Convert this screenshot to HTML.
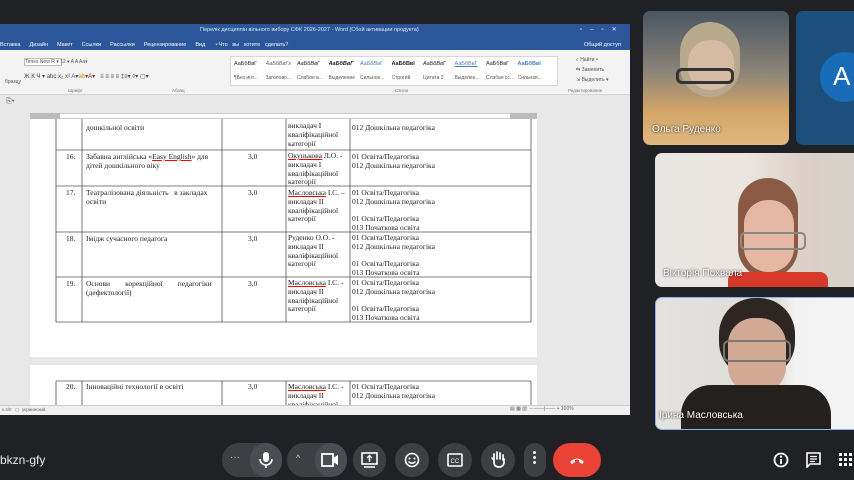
<!DOCTYPE html><html><head><meta charset="utf-8"><style>
*{margin:0;padding:0;box-sizing:border-box}
html,body{width:854px;height:480px;overflow:hidden}
body{background:#202124;position:relative;font-family:"Liberation Sans",sans-serif}
.a{position:absolute}
.doc{font-family:"Liberation Serif",serif;font-size:7.5px;color:#222;line-height:8.8px}
.t{position:absolute;font-size:6px;color:#555;white-space:nowrap}
.btn{position:absolute;top:443px;height:34px;border-radius:17px;background:#3c4043}
.nm{position:absolute;color:#fff;font-size:10px;text-shadow:0 0 2px #000;white-space:nowrap}
.st{display:inline-block;width:31.5px;overflow:hidden;white-space:nowrap}
</style></head><body>
<div class="a" style="left:0;top:24px;width:630px;height:391px;background:#e8e8e8"></div>
<div class="a" style="left:0;top:24px;width:630px;height:26px;background:#2b579a"></div>
<div class="t" style="left:200px;top:27px;color:#dfe6f3;font-size:5.5px">Перелік дисциплін вільного вибору СФК 2026-2027 - Word (Сбой активации продукта)</div>
<div class="t" style="left:0;top:42px;color:#fff;font-size:5.5px;word-spacing:3px">Вставка&nbsp; Дизайн&nbsp; Макет&nbsp; Ссылки&nbsp; Рассылки&nbsp; Рецензирование&nbsp; Вид&nbsp; ♀Что&nbsp;вы&nbsp;хотите&nbsp;сделать?</div>
<div class="t" style="left:584px;top:42px;color:#fff;font-size:5.5px">Общий доступ</div>
<div class="t" style="left:580px;top:26px;color:#fff;font-size:6px;letter-spacing:8px">▫–▫✕</div>
<div class="a" style="left:0;top:50px;width:630px;height:45px;background:#f3f3f3;border-bottom:1px solid #d4d4d4"></div>
<div class="a" style="left:24px;top:58px;width:38px;height:8px;background:#fff;border:1px solid #bbb"></div>
<div class="t" style="left:25px;top:59px;font-size:5px">Times New R ▾ 12 ▾ A A Aa▾</div>
<div class="t" style="left:24px;top:73px;font-size:6px;color:#444">Ж К Ч ▾ abc x₂ x² <span style="color:#36c">A</span>▾<span style="color:#c90">ab</span>▾<span style="color:#c00">A</span>▾ &nbsp; ≡ ≡ ≡ ≡ ‡≡▾ ◊▾ ▢▾</div>
<div class="a" style="left:230px;top:56px;width:328px;height:30px;background:#fff;border:1px solid #d8d8d8"></div>
<div class="t" style="left:234px;top:61px;font-size:5.5px;color:#222"><span class="st">АаБбВвГ</span><span class="st"><i style="color:#666">АаБбВвГг</i></span><span class="st"><i>АаБбВвГ</i></span><span class="st"><b><i>АаБбВвГ</i></b></span><span class="st"><i style="color:#4a7ebb">АаБбВвГ</i></span><span class="st"><b>АаБбВвІ</b></span><span class="st"><i>АаБбВвГ</i></span><span class="st"><u style="color:#4a7ebb">АаБбВвГ</u></span><span class="st">АаБбВвГ</span><span class="st"><b style="color:#4a7ebb">АаБбВвІ</b></span></div>
<div class="t" style="left:234px;top:75px;font-size:5px"><span class="st">¶Без инт...</span><span class="st">Заголово...</span><span class="st">Слабое в...</span><span class="st">Выделение</span><span class="st">Сильное...</span><span class="st">Строгий</span><span class="st">Цитата 2</span><span class="st">Выделен...</span><span class="st">Слабая сс...</span><span class="st">Сильная...</span></div>
<div class="t" style="left:576px;top:55px;font-size:5px;line-height:10px">⌕ Найти ▾<br>⇆ Заменить<br>⇲ Выделить ▾</div>
<div class="t" style="left:68px;top:88px;font-size:4.5px;color:#777">Шрифт</div>
<div class="t" style="left:172px;top:88px;font-size:4.5px;color:#777">Абзац</div>
<div class="t" style="left:395px;top:88px;font-size:4.5px;color:#777">Стили</div>
<div class="t" style="left:568px;top:88px;font-size:4.5px;color:#777">Редактирование</div>
<div class="t" style="left:5px;top:79px;font-size:5px">бразцу</div>
<div class="t" style="left:6px;top:98px;font-size:7px;color:#666">⎘▾</div>
<div class="a" style="left:30px;top:113px;width:507px;height:6px;background:#fff;border:1px solid #ccc"></div>
<div class="a" style="left:30px;top:113px;width:30px;height:6px;background:#bbb"></div>
<div class="a" style="left:510px;top:113px;width:27px;height:6px;background:#bbb"></div>
<div class="a" style="left:30px;top:119px;width:507px;height:238px;background:#fff"></div>
<div class="a" style="left:30px;top:365px;width:507px;height:40px;background:#fff"></div>
<div class="a doc" style="left:0;top:0;width:630px;height:405px;overflow:hidden">
<svg class="a" style="left:0;top:0" width="630" height="405">
<g stroke="#555" stroke-width="0.8" fill="none">
<line x1="56" y1="119" x2="56" y2="322"/><line x1="82" y1="119" x2="82" y2="322"/><line x1="222" y1="119" x2="222" y2="322"/><line x1="286" y1="119" x2="286" y2="322"/><line x1="350" y1="119" x2="350" y2="322"/><line x1="531" y1="119" x2="531" y2="322"/>
<line x1="56" y1="150" x2="531" y2="150"/><line x1="56" y1="186" x2="531" y2="186"/><line x1="56" y1="232" x2="531" y2="232"/><line x1="56" y1="277" x2="531" y2="277"/><line x1="56" y1="322" x2="531" y2="322"/>
<line x1="56" y1="381" x2="531" y2="381"/><line x1="56" y1="381" x2="56" y2="405"/><line x1="82" y1="381" x2="82" y2="405"/><line x1="222" y1="381" x2="222" y2="405"/><line x1="286" y1="381" x2="286" y2="405"/><line x1="350" y1="381" x2="350" y2="405"/><line x1="531" y1="381" x2="531" y2="405"/>
</g></svg>
<div class="a" style="left:86px;top:124px">дошкільної освіти</div>
<div class="a" style="left:288px;top:122px">викладач I<br>кваліфікаційної<br>категорії</div>
<div class="a" style="left:352px;top:124px">012 Дошкільна педагогіка</div>
<div class="a" style="left:66px;top:153px">16.</div><div class="a" style="left:86px;top:153px;width:134px">Забавна англійська «<u style="text-decoration-color:red">Easy English</u>» для дітей дошкільного віку</div><div class="a" style="left:248px;top:153px">3,0</div><div class="a" style="left:288px;top:152px"><u style="text-decoration-color:red">Окунькова</u> Л.О. -<br>викладач I<br>кваліфікаційної<br>категорії</div><div class="a" style="left:352px;top:153px">01 Освіта/Педагогіка<br>012 Дошкільна педагогіка</div>
<div class="a" style="left:66px;top:189px">17.</div><div class="a" style="left:86px;top:189px;width:134px">Театралізована діяльність &nbsp; в закладах освіти</div><div class="a" style="left:248px;top:189px">3,0</div><div class="a" style="left:288px;top:189px"><u style="text-decoration-color:red">Масловська</u> І.С. –<br>викладач II<br>кваліфікаційної<br>категорії</div><div class="a" style="left:352px;top:189px">01 Освіта/Педагогіка<br>012 Дошкільна педагогіка<br><br>01 Освіта/Педагогіка<br>013 Початкова освіта</div>
<div class="a" style="left:66px;top:235px">18.</div><div class="a" style="left:86px;top:235px">Імідж сучасного педагога</div><div class="a" style="left:248px;top:235px">3,0</div><div class="a" style="left:288px;top:234px">Руденко О.О. -<br>викладач II<br>кваліфікаційної<br>категорії</div><div class="a" style="left:352px;top:234px">01 Освіта/Педагогіка<br>012 Дошкільна педагогіка<br><br>01 Освіта/Педагогіка<br>013 Початкова освіта</div>
<div class="a" style="left:66px;top:280px">19.</div><div class="a" style="left:86px;top:280px;width:134px">Основи &nbsp;&nbsp;&nbsp;&nbsp;&nbsp;&nbsp; корекційної &nbsp;&nbsp;&nbsp;&nbsp;&nbsp;&nbsp; педагогіки (дефектології)</div><div class="a" style="left:248px;top:280px">3,0</div><div class="a" style="left:288px;top:279px"><u style="text-decoration-color:red">Масловська</u> І.С. -<br>викладач II<br>кваліфікаційної<br>категорії</div><div class="a" style="left:352px;top:279px">01 Освіта/Педагогіка<br>012 Дошкільна педагогіка<br><br>01 Освіта/Педагогіка<br>013 Початкова освіта</div>
<div class="a" style="left:66px;top:383px">20.</div><div class="a" style="left:86px;top:383px">Інноваційні технології в освіті</div><div class="a" style="left:248px;top:383px">3,0</div><div class="a" style="left:288px;top:383px"><u style="text-decoration-color:red">Масловська</u> І.С. -<br>викладач II<br>кваліфікаційної</div><div class="a" style="left:352px;top:383px">01 Освіта/Педагогіка<br>012 Дошкільна педагогіка</div>
</div>
<div class="a" style="left:0;top:405px;width:630px;height:10px;background:#f0f0f0;border-top:1px solid #ccc"></div>
<div class="t" style="left:2px;top:407px;font-size:4.5px;color:#666">к 4/0 &nbsp; ▢ &nbsp;украинский</div>
<div class="t" style="left:510px;top:406px;font-size:5px;color:#666">▤ ▦ ▥ &nbsp;– ——|—— + 100%</div>
<!-- tiles -->
<div class="a" style="left:643px;top:11px;width:146px;height:134px;border-radius:7px;overflow:hidden;background:linear-gradient(180deg,#4a5562 0%,#8a8478 45%,#d3a568 75%,#e0b880 100%)">
<div class="a" style="left:37px;top:11px;width:60px;height:75px;border-radius:30px;background:#b9a98c"></div>
<div class="a" style="left:45px;top:29px;width:46px;height:50px;border-radius:22px;background:#d6bba3"></div>
<div class="a" style="left:33px;top:57px;width:58px;height:16px;border:3px solid #333;border-radius:6px"></div>
</div>
<div class="nm" style="left:652px;top:124px">Ольга Руденко</div>
<div class="a" style="left:796px;top:11px;width:58px;height:134px;border-radius:7px 0 0 7px;overflow:hidden;background:#1d4f7d">
<div class="a" style="left:24px;top:41px;width:50px;height:50px;border-radius:25px;background:#1a6bb8"></div>
<div class="a" style="left:37px;top:50px;color:#fff;font-size:26px">A</div>
</div>
<div class="a" style="left:655px;top:153px;width:199px;height:134px;border-radius:7px 0 0 7px;overflow:hidden;background:linear-gradient(90deg,#e8e6e4 0%,#ebe5e0 45%,#dcd0c8 75%,#d8d2cc 100%)">
<div class="a" style="left:83px;top:25px;width:60px;height:100px;border-radius:30px;background:#8a5a45"></div>
<div class="a" style="left:89px;top:47px;width:50px;height:72px;border-radius:24px;background:#e4b8a4"></div>
<div class="a" style="left:73px;top:119px;width:100px;height:15px;border-radius:8px 8px 0 0;background:#d63a2a"></div>
<div class="a" style="left:85px;top:79px;width:66px;height:18px;border:2px solid #888;border-radius:5px"></div>
</div>
<div class="nm" style="left:663px;top:268px">Вікторія Похвала</div>
<div class="a" style="left:655px;top:297px;width:199px;height:133px;border-radius:7px 0 0 7px;overflow:hidden;background:linear-gradient(90deg,#e4e2e0 0%,#dddbd8 60%,#f2f2f2 70%,#f4f4f4 100%);border:1px solid #8ab4f8;border-right:none">
<div class="a" style="left:63px;top:0;width:76px;height:80px;border-radius:36px;background:#2d2622"></div>
<div class="a" style="left:72px;top:20px;width:58px;height:75px;border-radius:26px;background:#d2aa94"></div>
<div class="a" style="left:67px;top:42px;width:68px;height:22px;border:2px solid #777;border-radius:6px"></div>
<div class="a" style="left:25px;top:87px;width:150px;height:46px;border-radius:30px 30px 0 0;background:#24201e"></div>
</div>
<div class="nm" style="left:659px;top:410px">Ірина Масловська</div>
<!-- bottom bar -->
<div class="a" style="left:0;top:453px;color:#e8eaed;font-size:12px">bkzn-gfy</div>
<div class="btn" style="left:222px;width:60px"></div><div class="btn" style="left:250px;width:32px;background:#4a4d51"></div>
<div class="a" style="left:230px;top:452px;color:#ccc;font-size:10px">···</div>
<svg class="a" style="left:258px;top:451px" width="16" height="18"><rect x="5" y="1" width="6" height="10" rx="3" fill="#fff"/><path d="M2 8a6 6 0 0 0 12 0M8 14v3" stroke="#fff" stroke-width="1.6" fill="none"/></svg>
<div class="btn" style="left:287px;width:60px"></div><div class="btn" style="left:315px;width:32px;background:#4a4d51"></div>
<div class="a" style="left:296px;top:453px;color:#ccc;font-size:9px">^</div>
<svg class="a" style="left:321px;top:453px" width="18" height="14"><rect x="1" y="1" width="11" height="12" fill="none" stroke="#fff" stroke-width="1.8"/><path d="M12 5l5-3v10l-5-3z" fill="#fff"/></svg>
<div class="btn" style="left:353px;width:33px"></div>
<svg class="a" style="left:361px;top:452px" width="17" height="16"><rect x="1" y="1" width="15" height="11" fill="none" stroke="#fff" stroke-width="1.6"/><path d="M8.5 10V4M6 6l2.5-2.5L11 6M3 15h11" stroke="#fff" stroke-width="1.5" fill="none"/></svg>
<div class="btn" style="left:395px;width:34px"></div>
<svg class="a" style="left:404px;top:452px" width="16" height="16"><circle cx="8" cy="8" r="6.5" fill="none" stroke="#fff" stroke-width="1.6"/><circle cx="5.5" cy="6.5" r="1" fill="#fff"/><circle cx="10.5" cy="6.5" r="1" fill="#fff"/><path d="M4.5 9.5q3.5 3.5 7 0" stroke="#fff" stroke-width="1.4" fill="none"/></svg>
<div class="btn" style="left:438px;width:34px"></div>
<svg class="a" style="left:447px;top:453px" width="16" height="14"><rect x="1" y="1" width="14" height="12" rx="1" fill="none" stroke="#fff" stroke-width="1.6"/><text x="3.5" y="10" font-size="6" fill="#fff" font-family="Liberation Sans">CC</text></svg>
<div class="btn" style="left:481px;width:34px"></div>
<svg class="a" style="left:490px;top:450px" width="16" height="19"><path d="M4 10V4M7 9V2M10 9V3M13 10V5M4 10v2q0 5 5 5 4 0 5-4V9M4 10L2 8" stroke="#fff" stroke-width="1.7" fill="none" stroke-linecap="round"/></svg>
<div class="btn" style="left:524px;width:22px"></div>
<div class="a" style="left:533px;top:451px;width:3px;height:3px;background:#fff;border-radius:2px;box-shadow:0 5px #fff,0 10px #fff"></div>
<div class="btn" style="left:553px;width:48px;background:#ea4335"></div>
<svg class="a" style="left:568px;top:455px" width="18" height="10"><path d="M2 7q7-7 14 0l-2 2-3-2V5q-2-1-4 0v2l-3 2z" fill="#fff"/></svg>
<svg class="a" style="left:773px;top:452px" width="16" height="16"><circle cx="8" cy="8" r="6.5" fill="none" stroke="#fff" stroke-width="1.8"/><path d="M8 7v5" stroke="#fff" stroke-width="1.8"/><circle cx="8" cy="4.6" r="1.1" fill="#fff"/></svg>
<svg class="a" style="left:806px;top:452px" width="15" height="16"><path d="M1 1h13v11H4l-3 3z" fill="none" stroke="#fff" stroke-width="1.6"/><path d="M4 4.5h7M4 7h7M4 9.5h5" stroke="#fff" stroke-width="1.2"/></svg>
<svg class="a" style="left:839px;top:453px" width="14" height="14" fill="#fff"><rect x="0" y="0" width="3" height="3"/><rect x="5" y="0" width="3" height="3"/><rect x="10" y="0" width="3" height="3"/><rect x="0" y="5" width="3" height="3"/><rect x="5" y="5" width="3" height="3"/><rect x="10" y="5" width="3" height="3"/><rect x="0" y="10" width="3" height="3"/><rect x="5" y="10" width="3" height="3"/><rect x="10" y="10" width="3" height="3"/></svg>
</body></html>
